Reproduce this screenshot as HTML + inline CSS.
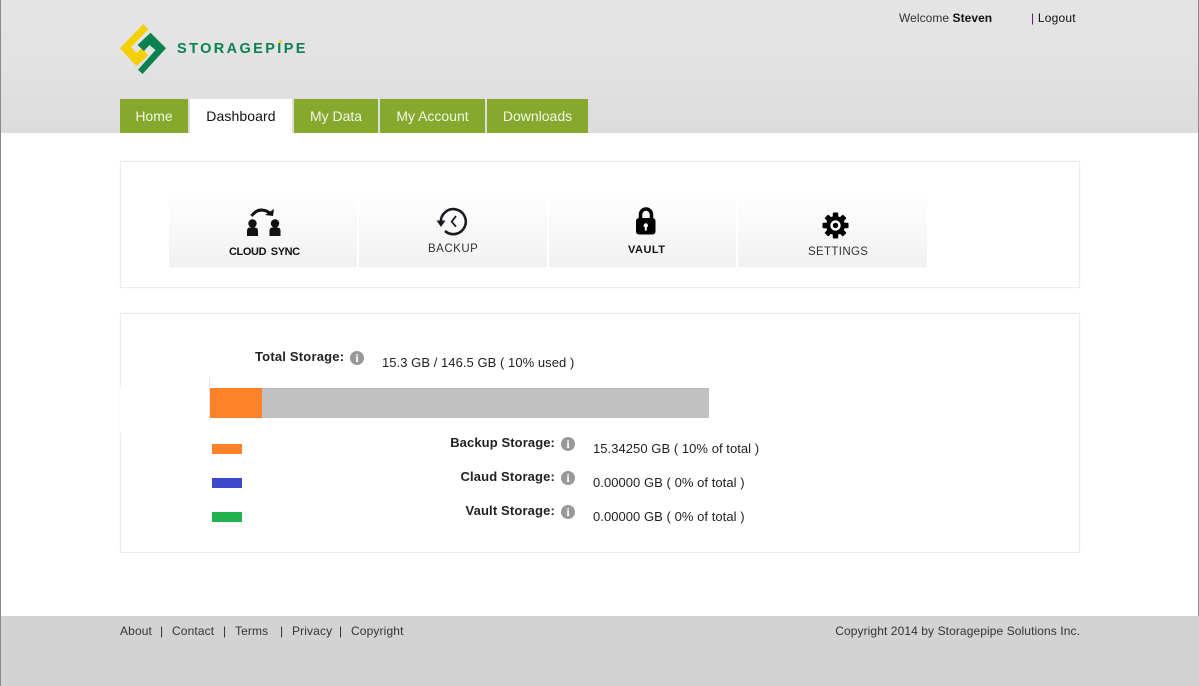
<!DOCTYPE html>
<html><head><meta charset="utf-8"><title>Storagepipe Dashboard</title>
<style>
*{box-sizing:border-box}
html,body{margin:0;padding:0}
body{width:1199px;height:686px;position:relative;overflow:hidden;background:#fff;font-family:"Liberation Sans",sans-serif;font-size:12px;color:#222}
.a{position:absolute;white-space:nowrap}
#hd{left:0;top:0;width:1199px;height:133px;background:linear-gradient(#e4e4e4,#e3e3e3 40%,#dcdcdc)}
#lb{left:0;top:0;width:1px;height:686px;background:#8a8a8a;z-index:5}
#rb{left:1198px;top:0;width:1px;height:616px;background:#8a8a8a;z-index:5}
.tab{position:absolute;top:99px;height:34px;background:#86a92d;color:#f4f6ea;font-size:14px;line-height:35px;text-align:center}
.tab.on{background:#fff;color:#111}
.card{position:absolute;left:120px;width:960px;background:#fff;border:1px solid #ececec;box-shadow:0 0 3px rgba(0,0,0,.03)}
.tile{position:absolute;top:192px;height:75px;background:linear-gradient(#fff,#f1f1f1)}
.tl{position:absolute;font-size:11.5px;white-space:nowrap;color:#333}
.lab{position:absolute;font-weight:bold;font-size:13px;color:#222;text-align:right;white-space:nowrap}
.val{position:absolute;font-size:13px;letter-spacing:.05px;color:#222;white-space:nowrap}
.inf{position:absolute;width:14px;height:14px;border-radius:50%;background:#999;color:#fff;font:bold 12px/14px "Liberation Serif",serif;text-align:center}
.sw{position:absolute;left:212px;width:30px;height:10px}
#ft{left:0;top:616px;width:1199px;height:70px;background:#d3d3d3}
.f{position:absolute;top:624px;font-size:12px;letter-spacing:.13px;color:#333;white-space:nowrap}
</style></head><body>
<div class="a" id="hd"></div><div class="a" id="lb"></div><div class="a" id="rb"></div>

<svg class="a" style="left:118px;top:22px" width="52" height="54" viewBox="118 22 52 54">
<path fill="#f5d000" d="M120 48.300L143.300 24L148.300 29.300L131 47.300L136.500 53L142 48L148.300 55.500L136.500 66Z"/>
<path fill="#0a8150" d="M150.500 32.700L166 48.300L142.500 74L138 69.800L155.500 50L149.500 45L144 51L137.500 45Z"/>
</svg>
<div class="a" style="left:177px;top:41px;font-size:14.500px;font-weight:bold;letter-spacing:2.400px;color:#0a8150">STORAGEPIPE</div>
<div class="a" style="left:279px;top:40px;width:3px;height:3px;border-radius:50%;background:#f5d000"></div>

<div class="a" style="left:899px;top:11px;color:#333;letter-spacing:.05px">Welcome <b style="color:#111">Steven</b></div>
<div class="a" style="left:1031px;top:11px;color:#111;letter-spacing:.2px"><span style="color:#50145a">|</span> Logout</div>

<div class="tab" style="left:120px;width:68px">Home</div>
<div class="tab on" style="left:190px;width:102px;letter-spacing:.1px">Dashboard</div>
<div class="tab" style="left:294px;width:84px">My Data</div>
<div class="tab" style="left:380px;width:105px">My Account</div>
<div class="tab" style="left:487px;width:101px">Downloads</div>

<div class="card" style="top:161px;height:127px"></div>
<div class="tile" style="left:169px;width:188px"></div>
<div class="tile" style="left:359px;width:188px"></div>
<div class="tile" style="left:549px;width:187px"></div>
<div class="tile" style="left:738px;width:189px"></div>

<svg class="a" style="left:245px;top:205px" width="38" height="34" viewBox="0 0 38 34">
<path d="M6.500 11Q14 1 25 8" fill="none" stroke="#111" stroke-width="3"/>
<path d="M29 4L28 11L20 10Z" fill="#111"/>
<g fill="#111"><circle cx="7.500" cy="18.500" r="4.200"/><path d="M2 31V26Q2 22.500 5 22.500H10Q13 22.500 13 26V31Z"/>
<circle cx="30" cy="18.500" r="4.200"/><path d="M24.500 31V26Q24.500 22.500 27.500 22.500H32.500Q35.500 22.500 35.500 26V31Z"/></g>
</svg>
<div class="tl" style="left:229px;top:246px;font-weight:bold;color:#111;font-size:11px;letter-spacing:-.4px;word-spacing:2px">CLOUD SYNC</div>

<svg class="a" style="left:436px;top:206px" width="34" height="32" viewBox="0 0 34 32">
<path d="M4.800 15.700A12.500 12.500 0 1 1 9 25" fill="none" stroke="#1a1a22" stroke-width="2.600"/>
<path d="M.5 14.500H9.500L5 21Z" fill="#1a1a22"/>
<path d="M20 10L15.700 15.700L20 20.700" fill="none" stroke="#1a1a22" stroke-width="1.800"/>
</svg>
<div class="tl" style="left:428px;top:243px;letter-spacing:.5px">BACKUP</div>

<svg class="a" style="left:634px;top:207px" width="24" height="30" viewBox="0 0 24 30">
<path d="M6.500 13V7.500A5.500 5.500 0 0 1 17.500 7.500V13" fill="none" stroke="#000" stroke-width="3.500"/>
<rect x="2" y="11" width="19.500" height="16.500" rx="3" fill="#000"/>
<circle cx="11.800" cy="18.500" r="2.200" fill="#fff"/><rect x="10.800" y="19" width="2" height="4.500" fill="#fff"/>
</svg>
<div class="tl" style="left:628px;top:244px;font-weight:bold;color:#111;font-size:11px;letter-spacing:.5px">VAULT</div>

<svg class="a" style="left:822px;top:212px" width="27" height="27" viewBox="-13.500 -13.500 27 27">
<g fill="#000"><circle r="9.500"/>
<rect x="-2.700" y="-13" width="5.400" height="26" rx="1"/>
<rect x="-2.700" y="-13" width="5.400" height="26" rx="1" transform="rotate(45)"/>
<rect x="-2.700" y="-13" width="5.400" height="26" rx="1" transform="rotate(90)"/>
<rect x="-2.700" y="-13" width="5.400" height="26" rx="1" transform="rotate(135)"/></g>
<circle r="5.200" fill="#fff"/><circle r="2.700" fill="#000"/>
</svg>
<div class="tl" style="left:808px;top:246px;letter-spacing:.35px">SETTINGS</div>

<div class="card" style="top:313px;height:240px"></div>
<div class="a" style="left:120px;top:387px;width:89px;height:46px;background:#fff"></div>
<div class="a" style="left:209px;top:377px;width:1px;height:44px;background:#e6e6e6"></div>

<div class="lab" style="left:255px;top:349px;letter-spacing:.2px">Total Storage:</div>
<div class="inf" style="left:350px;top:351px">i</div>
<div class="val" style="left:382px;top:355px">15.3 GB / 146.5 GB ( 10% used )</div>

<div class="a" style="left:210px;top:388px;width:499px;height:30px;background:#c1c1c1;border-top:1px solid #b4bccc"></div>
<div class="a" style="left:210px;top:388px;width:52px;height:30px;background:#ff8228"></div>

<div class="sw" style="top:444px;background:#ff8228"></div>
<div class="sw" style="top:478px;background:#3f48cc"></div>
<div class="sw" style="top:512px;background:#22b14c"></div>

<div class="lab" style="right:644px;top:435px;letter-spacing:.1px">Backup Storage:</div>
<div class="inf" style="left:561px;top:437px">i</div>
<div class="val" style="left:593px;top:441px">15.34250 GB ( 10% of total )</div>
<div class="lab" style="right:644px;top:469px;letter-spacing:.15px">Claud Storage:</div>
<div class="inf" style="left:561px;top:471px">i</div>
<div class="val" style="left:593px;top:475px">0.00000 GB ( 0% of total )</div>
<div class="lab" style="right:644px;top:503px;letter-spacing:.15px">Vault Storage:</div>
<div class="inf" style="left:561px;top:505px">i</div>
<div class="val" style="left:593px;top:509px">0.00000 GB ( 0% of total )</div>

<div class="a" id="ft"></div>
<div class="f" style="left:120px">About</div><div class="f" style="left:160px">|</div>
<div class="f" style="left:172px">Contact</div><div class="f" style="left:223px">|</div>
<div class="f" style="left:235px">Terms</div><div class="f" style="left:280px">|</div>
<div class="f" style="left:292px">Privacy</div><div class="f" style="left:339px">|</div>
<div class="f" style="left:351px">Copyright</div>
<div class="f" style="right:119px;letter-spacing:.09px">Copyright 2014 by Storagepipe Solutions Inc.</div>
</body></html>
